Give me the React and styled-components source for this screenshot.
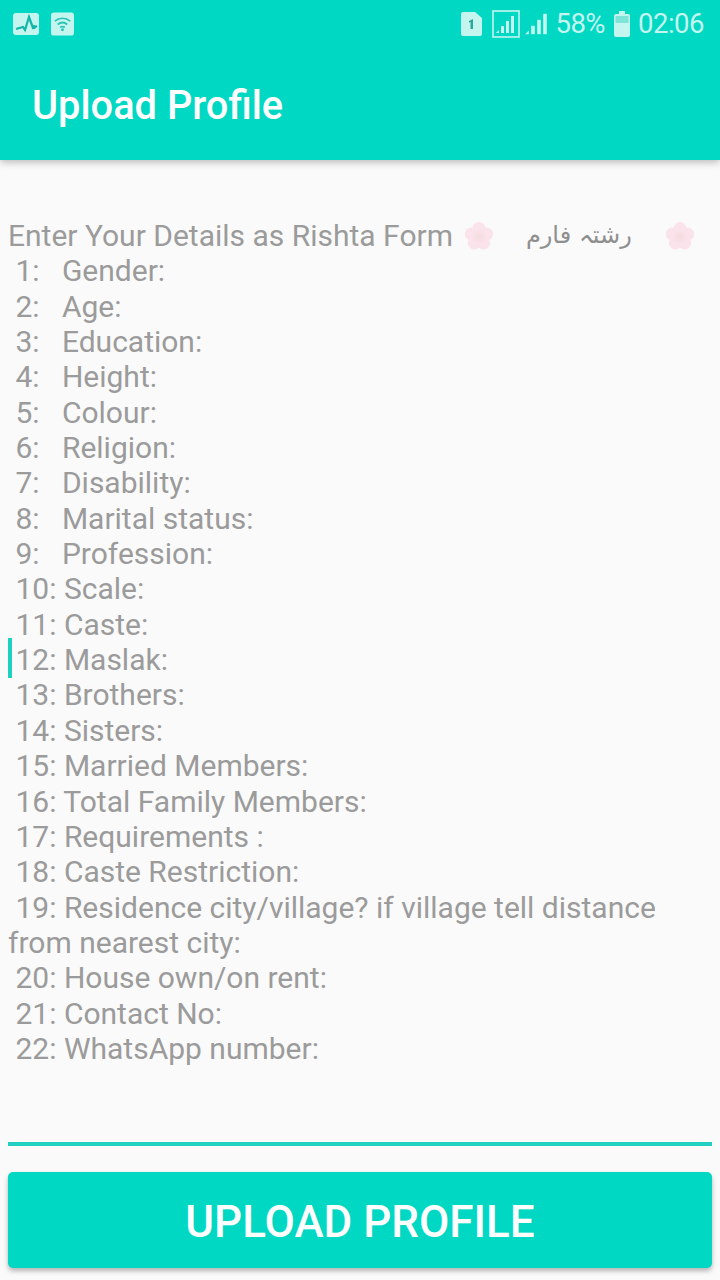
import styled, { createGlobalStyle } from "styled-components";

const GlobalStyle = createGlobalStyle`
  html, body {
    margin: 0;
    padding: 0;
    background: #fafafa;
  }
  * {
    box-sizing: border-box;
  }
`;

const Page = styled.div`
  width: 720px;
  height: 1280px;
  display: flex;
  flex-direction: column;
  overflow: hidden;
  background: #fafafa;
  font-family: Roboto, "Noto Sans", sans-serif;
`;

const Header = styled.header`
  height: 160px;
  flex-shrink: 0;
  background: #00d8c4;
  box-shadow: 0 2px 8px rgba(0, 0, 0, 0.28);
  display: flex;
  flex-direction: column;
`;

const StatusBar = styled.div`
  height: 50px;
  padding: 0 16px 2px 13px;
  display: flex;
  align-items: center;
  justify-content: space-between;
  color: #c4f6ef;
`;

const StatusGroup = styled.div`
  display: flex;
  align-items: center;
  gap: ${(p) => p.$gap || 0}px;
`;

const SignalGroup = styled(StatusGroup)`
  margin: 0 7px 0 10px;
`;

const BatterySlot = styled(StatusGroup)`
  margin: 0 8px 0 9px;
`;

const StatusText = styled.span`
  font-size: 27.5px;
  line-height: 34px;
  letter-spacing: -0.5px;
`;

const Title = styled.h1`
  margin: 0;
  padding: 0 32px;
  height: 110px;
  display: flex;
  align-items: center;
  font-size: 39.8px;
  font-weight: 500;
  color: #ffffff;
`;

const Form = styled.main`
  flex: 1;
  padding: 58px 8px 0;
`;

const Line = styled.div`
  position: relative;
  white-space: pre-wrap;
  font-size: 30px;
  line-height: 35.35px;
  color: #9b9b9b;
`;

const FirstLine = styled(Line)`
  display: flex;
  align-items: center;
  white-space: pre;
`;

const FlowerWrap = styled.span`
  display: flex;
  margin-left: 3.5px;
`;

const Urdu = styled.span`
  margin: 0 30px 0 32px;
  font-family: "DejaVu Sans", sans-serif;
  font-size: 24px;
  color: #8f8f8f;
`;

const Caret = styled.span`
  position: absolute;
  left: 0;
  top: -4px;
  width: 4px;
  height: 40px;
  background: #1fd0c0;
`;

const Underline = styled.div`
  height: 4px;
  margin: 0 8px;
  background: #1fd0c0;
`;

const UploadButton = styled.button`
  display: block;
  width: 704px;
  height: 96px;
  margin: 26px 8px 12px;
  padding: 3px 0 0;
  border: none;
  border-radius: 5px;
  background: #00d8c4;
  box-shadow: 0 3px 5px rgba(0, 0, 0, 0.28);
  color: #ffffff;
  font-family: Roboto, sans-serif;
  font-size: 44px;
  font-weight: 500;
`;

const rows = [
  " 1:   Gender:",
  " 2:   Age:",
  " 3:   Education:",
  " 4:   Height:",
  " 5:   Colour:",
  " 6:   Religion:",
  " 7:   Disability:",
  " 8:   Marital status:",
  " 9:   Profession:",
  " 10: Scale:",
  " 11: Caste:",
  " 12: Maslak:",
  " 13: Brothers:",
  " 14: Sisters:",
  " 15: Married Members:",
  " 16: Total Family Members:",
  " 17: Requirements :",
  " 18: Caste Restriction:",
  " 19: Residence city/village? if village tell distance from nearest city:",
  " 20: House own/on rent:",
  " 21: Contact No:",
  " 22: WhatsApp number:",
];

function Flower() {
  const petals = [0, 72, 144, 216, 288];
  return (
    <FlowerWrap>
      <svg width="30" height="28" viewBox="0 0 30 28">
        {petals.map((a) => (
          <circle
            key={a}
            cx="15"
            cy="6.500"
            r="6.500"
            fill="#fae3ea"
            transform={`rotate(${a} 15 14.500)`}
          />
        ))}
        <circle cx="15" cy="14.500" r="6" fill="#f9dfe7" />
        <circle cx="15" cy="14.500" r="3" fill="#f4dfe0" />
      </svg>
    </FlowerWrap>
  );
}

function PulseIcon() {
  return (
    <svg width="26" height="22" viewBox="0 0 26 22">
      <rect width="26" height="22" rx="3" fill="#c4f6ef" />
      <path
        d="M3 16l7-2 2 3 4-13 4 11 4-2"
        fill="none"
        stroke="#12b5a8"
        strokeWidth="2.200"
      />
      <circle cx="21" cy="14" r="2" fill="#12b5a8" />
    </svg>
  );
}

function WifiIcon() {
  return (
    <svg width="23" height="24" viewBox="0 0 24 24">
      <rect width="24" height="24" rx="3" fill="#c4f6ef" />
      <g fill="none" stroke="#2cc4b6" strokeWidth="1.800">
        <path d="M4 9c4.500-4 11.500-4 16 0" />
        <path d="M7 12.500c3-2.500 7-2.500 10 0" />
        <path d="M9.500 15.500c1.500-1 3.500-1 5 0" />
      </g>
      <circle cx="12" cy="18" r="1.500" fill="#2cc4b6" />
    </svg>
  );
}

function SimIcon() {
  return (
    <svg width="21" height="24" viewBox="0 0 21 24">
      <path d="M2 0h12l7 6v16a2 2 0 0 1-2 2H2a2 2 0 0 1-2-2V2a2 2 0 0 1 2-2z" fill="#c4f6ef" />
      <path d="M8 9l4-2v10H9.500V10l-1.500.700z" fill="#2aa89e" />
    </svg>
  );
}

function Bars() {
  return (
    <>
      <path d="M1 21l3-3v3z" />
      <rect x="6" y="14" width="3" height="7" />
      <rect x="11" y="9" width="3" height="12" />
      <rect x="16" y="4" width="3" height="17" />
    </>
  );
}

function SignalBoxIcon() {
  return (
    <svg width="28" height="28" viewBox="0 0 28 28">
      <rect x="1" y="1" width="26" height="26" fill="none" stroke="#c4f6ef" strokeWidth="1.600" />
      <g fill="#c4f6ef" transform="translate(3 2)">
        <Bars />
      </g>
    </svg>
  );
}

function SignalIcon() {
  return (
    <svg width="24" height="24" viewBox="0 3 20 19" fill="#c4f6ef">
      <Bars />
    </svg>
  );
}

function BatteryIcon() {
  return (
    <svg width="16" height="26" viewBox="0 0 16 26">
      <path d="M5 0h6v3h3a2 2 0 0 1 2 2v19a2 2 0 0 1-2 2H2a2 2 0 0 1-2-2V5a2 2 0 0 1 2-2h3z" fill="#c4f6ef" />
      <rect x="1.500" y="5" width="13" height="7" fill="#7fe4d8" />
    </svg>
  );
}

function App() {
  return (
    <>
      <GlobalStyle />
      <Page>
        <Header>
          <StatusBar>
            <StatusGroup $gap={12}>
              <PulseIcon />
              <WifiIcon />
            </StatusGroup>
            <StatusGroup>
              <SimIcon />
              <SignalGroup $gap={4}>
                <SignalBoxIcon />
                <SignalIcon />
              </SignalGroup>
              <StatusText>58%</StatusText>
              <BatterySlot>
                <BatteryIcon />
              </BatterySlot>
              <StatusText>02:06</StatusText>
            </StatusGroup>
          </StatusBar>
          <Title>Upload Profile</Title>
        </Header>

        <Form>
          <FirstLine>
            Enter Your Details as Rishta Form <Flower />
            <Urdu>رشتہ فارم</Urdu>
            <Flower />
          </FirstLine>
          {rows.map((row) => (
            <Line key={row}>
              {row.startsWith(" 12:") && <Caret />}
              {row}
            </Line>
          ))}
        </Form>

        <Underline />
        <UploadButton>UPLOAD PROFILE</UploadButton>
      </Page>
    </>
  );
}

export default App;
